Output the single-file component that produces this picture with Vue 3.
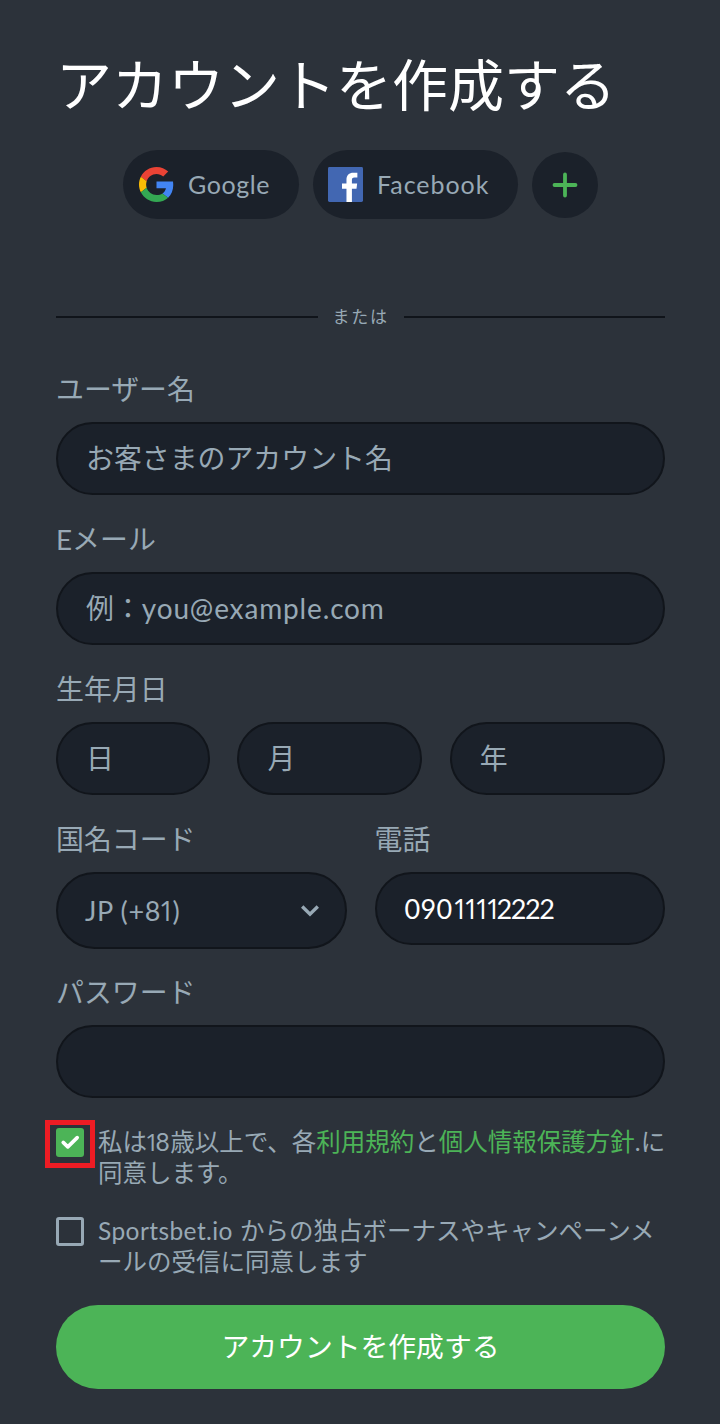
<script setup>
const birthFields = [
  { name: 'day', text: '日' },
  { name: 'month', text: '月' },
  { name: 'year', text: '年' },
]
</script>

<template>
  <main class="page">
    <h1 class="title">アカウントを作成する</h1>

    <div class="social">
      <button class="social-btn google" type="button">
        <svg class="logo" viewBox="0 0 48 48">
          <path fill="#ea4335" d="M24 9.5c3.54 0 6.71 1.22 9.21 3.6l6.85-6.85C35.9 2.38 30.47 0 24 0 14.62 0 6.51 5.38 2.56 13.22l7.98 6.19C12.43 13.72 17.74 9.5 24 9.5z" />
          <path fill="#4285f4" d="M46.98 24.55c0-1.57-.15-3.09-.38-4.55H24v9.02h12.94c-.58 2.96-2.26 5.48-4.78 7.18l7.73 6c4.51-4.18 7.09-10.36 7.09-17.65z" />
          <path fill="#fbbc05" d="M10.53 28.59c-.48-1.45-.76-2.99-.76-4.59s.27-3.14.76-4.59l-7.98-6.19C.92 16.46 0 20.12 0 24c0 3.88.92 7.54 2.56 10.78l7.97-6.19z" />
          <path fill="#34a853" d="M24 48c6.48 0 11.93-2.13 15.89-5.81l-7.73-6c-2.15 1.45-4.92 2.3-8.16 2.3-6.26 0-11.57-4.22-13.47-9.91l-7.98 6.19C6.51 42.62 14.62 48 24 48z" />
        </svg>
        <span class="google-text">Google</span>
      </button>
      <button class="social-btn facebook" type="button">
        <svg class="logo" viewBox="0 0 36 36">
          <rect width="36" height="36" rx="1.5" fill="#4267b2" />
          <path fill="#fff" d="M19 36V22.3h-4.6v-5.4H19v-4c0-4.6 2.8-7.1 7-7.1 2 0 3.7.1 4.2.2v4.9h-2.9c-2.3 0-2.7 1.1-2.7 2.7v3.3H30l-.7 5.4h-4.7V36z" />
        </svg>
        <span class="facebook-text">Facebook</span>
      </button>
      <button class="plus" type="button" aria-label="その他">
        <svg width="26" height="26" viewBox="0 0 26 26">
          <path d="M13 2.5v21M2.5 13h21" fill="none" stroke="#4cb457" stroke-width="3.8" stroke-linecap="round" />
        </svg>
      </button>
    </div>

    <div class="divider"><span>または</span></div>

    <form class="form">
      <section class="group">
        <div class="label">ユーザー名</div>
        <div class="field"><span>お客さまのアカウント名</span></div>
      </section>

      <section class="group">
        <div class="label"><span class="latin-e">E</span>メール</div>
        <div class="field"><span>例：</span><span class="email">you@example.com</span></div>
      </section>

      <section class="group">
        <div class="label">生年月日</div>
        <div class="birth">
          <div v-for="f in birthFields" :key="f.name" class="field" :class="f.name"><span>{{ f.text }}</span></div>
        </div>
      </section>

      <section class="group phone-row">
        <div>
          <div class="label">国名コード</div>
          <div class="field select">
            <span class="code">JP (+8<span class="ones">1</span>)</span>
            <svg width="20" height="14" viewBox="0 0 20 14">
              <path d="M2.2 2.5 10 10.2l7.8-7.7" fill="none" stroke="#98a9b5" stroke-width="3.4" />
            </svg>
          </div>
        </div>
        <div>
          <div class="label">電話</div>
          <div class="field filled"><span class="number"><span class="prefix">090</span><span class="ones">1111</span><span class="twos">2222</span></span></div>
        </div>
      </section>

      <section class="group password">
        <div class="label">パスワード</div>
        <div class="field"></div>
      </section>

      <div class="agree">
        <span class="box checked">
          <svg width="28" height="28" viewBox="0 0 28 28">
            <path d="M7.2 14.4l4.6 4.5 9.4-9.3" fill="none" stroke="#fff" stroke-width="3.6" stroke-linecap="round" stroke-linejoin="round" />
          </svg>
        </span>
        <p>私は<span class="age"><span class="ones">1</span>8</span>歳以上で、各<a>利用規約</a>と<a>個人情報保護方針</a><span class="dot">.</span>に<br>同意します。</p>
      </div>

      <div class="agree news">
        <span class="box"></span>
        <p><span class="brand">Sportsbet.io</span>からの独占ボーナスやキャンペーンメ<br>ールの受信に同意します</p>
      </div>

      <button class="submit" type="button">アカウントを作成する</button>
    </form>
  </main>
</template>

<style>
html,
body {
  margin: 0;
  background: #2c323a;
}
</style>

<style scoped>
.page {
  box-sizing: border-box;
  width: 720px;
  height: 1424px;
  padding: 42px 55px 0 56px;
  overflow: hidden;
  background: #2c323a;
  color: #98a9b5;
  font-family: "Noto Sans CJK JP", sans-serif;
}
button {
  margin: 0;
  padding: 0;
  border: 0;
  color: inherit;
  font: inherit;
}
.title {
  margin: 0;
  height: 80px;
  color: #fff;
  font-size: 56px;
  font-weight: 400;
  line-height: 80px;
  white-space: nowrap;
}
.social {
  display: flex;
  align-items: center;
  gap: 14px;
  height: 69px;
  margin: 27.5px 0 0 67px;
}
.social-btn {
  box-sizing: border-box;
  display: flex;
  align-items: center;
  height: 69px;
  padding-left: 15px;
  border-radius: 35px;
  background: #1b212a;
  font-family: Lato, sans-serif;
  font-size: 25px;
  line-height: 30px;
}
.social-btn span { padding-bottom: 1px; }
.google { width: 176px; gap: 14px; padding-left: 16px; }
.facebook { width: 205px; gap: 14px; }
.logo { width: 35px; height: 35px; }
.google-text { letter-spacing: 0.6px; }
.facebook-text { letter-spacing: 0.95px; }
.plus {
  display: flex;
  align-items: center;
  justify-content: center;
  width: 66px;
  height: 66px;
  margin-top: 1px;
  border-radius: 50%;
  background: #1b212a;
}
.divider {
  display: flex;
  align-items: center;
  height: 26px;
  margin-top: 85.5px;
  font-size: 17px;
  line-height: 26px;
}
.divider::before,
.divider::after {
  content: "";
  flex: 1;
  height: 2px;
  background: #10141a;
}
.divider span {
  box-sizing: border-box;
  width: 86px;
  padding: 0 0 3px 15px;
  letter-spacing: 1.7px;
}
.form { margin-top: 37px; }
.group { height: 150px; }
.label {
  height: 55px;
  font-size: 27.9px;
  line-height: 43px;
  white-space: nowrap;
}
.field {
  box-sizing: border-box;
  display: flex;
  align-items: center;
  height: 73px;
  padding: 0 28px 4px;
  border: 2px solid #11151b;
  border-radius: 37px;
  background: #1b212a;
  font-size: 27.9px;
  line-height: 40px;
  white-space: nowrap;
}
.latin-e,
.email,
.code,
.number,
.age,
.dot,
.brand {
  font-family: Lato, sans-serif;
  line-height: 0;
}
.email {
  padding-top: 2px;
  font-size: 28px;
  letter-spacing: 0.85px;
}
.birth {
  display: grid;
  grid-template-columns: 154px 185px 215px;
  column-gap: 27.4px;
}
.phone-row {
  display: grid;
  grid-template-columns: 291px 290.5px;
  justify-content: space-between;
  height: 153px;
}
.select {
  justify-content: space-between;
  height: 77px;
  padding: 0 25px 0 27px;
  border-radius: 39px;
}
.code,
.number {
  font-size: 27px;
}
.code { letter-spacing: 0.6px; }
.ones {
  font-family: "Open Sans", sans-serif;
  letter-spacing: -4.4px;
}
.code .ones {
  margin-left: -2px;
  letter-spacing: -1.8px;
}
.prefix { letter-spacing: 0.3px; }
.twos { letter-spacing: -1.4px; }
.filled {
  padding-bottom: 0;
  color: #fff;
}
.password { height: 156px; }
.agree {
  display: flex;
  gap: 14px;
  height: 89px;
  font-size: 24.5px;
  line-height: 30.5px;
}
.agree p {
  margin: 0;
  white-space: nowrap;
}
.agree a { color: #4cb457; }
.age { margin: 0 0.5px 0 -2px; }
.age .ones { letter-spacing: -3.4px; }
.box {
  box-sizing: border-box;
  flex: none;
  width: 28px;
  height: 29px;
  margin-top: 2px;
  border: 3.5px solid #98a9b5;
  border-radius: 3px;
}
.checked {
  position: relative;
  border: 0;
  background: #4cb457;
}
.checked::after {
  content: "";
  position: absolute;
  inset: -8px -11px -11px;
  border: 5px solid #ed1c24;
}
.brand {
  margin-right: 7px;
  letter-spacing: 0.42px;
}
.submit {
  display: block;
  width: 609px;
  height: 84px;
  margin-top: 1px;
  padding-bottom: 4px;
  border-radius: 42px;
  background: #4cb457;
  color: #fff;
  font-size: 27.8px;
  line-height: 80px;
}
</style>
